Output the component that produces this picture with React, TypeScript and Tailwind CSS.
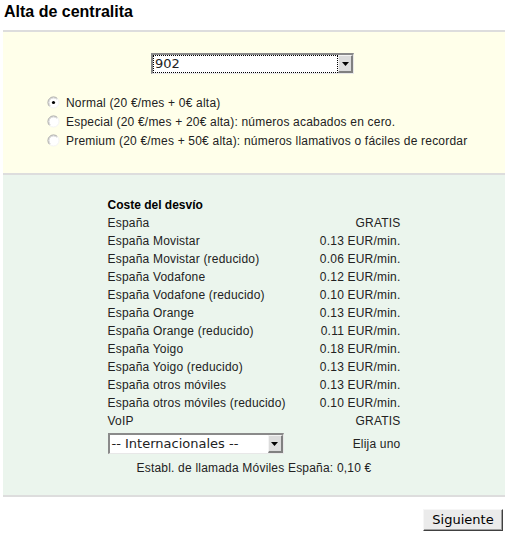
const rates = [
  ["España", "GRATIS"],
  ["España Movistar", "0.13 EUR/min."],
  ["España Movistar (reducido)", "0.06 EUR/min."],
  ["España Vodafone", "0.12 EUR/min."],
  ["España Vodafone (reducido)", "0.10 EUR/min."],
  ["España Orange", "0.13 EUR/min."],
  ["España Orange (reducido)", "0.11 EUR/min."],
  ["España Yoigo", "0.18 EUR/min."],
  ["España Yoigo (reducido)", "0.13 EUR/min."],
  ["España otros móviles", "0.13 EUR/min."],
  ["España otros móviles (reducido)", "0.10 EUR/min."],
  ["VoIP", "GRATIS"],
];

const plans = [
  { label: "Normal (20 €/mes + 0€ alta)", checked: true },
  { label: "Especial (20 €/mes + 20€ alta): números acabados en cero.", checked: false },
  { label: "Premium (20 €/mes + 50€ alta): números llamativos o fáciles de recordar", checked: false },
];

function Radio({ checked }: { checked: boolean }) {
  return (
    <svg width="13" height="13" viewBox="0 0 13 13" className="shrink-0 -mt-[2px]">
      <circle cx="6.5" cy="6.5" r="5.5" fill="#fff" />
      <path d="M2.6 10.4 A5.5 5.5 0 0 1 10.4 2.6" fill="none" stroke="#9c9c9c" strokeWidth="1" />
      <path d="M3.3 9.7 A4.5 4.5 0 0 1 9.7 3.3" fill="none" stroke="#d6d6d6" strokeWidth="1" />
      <path d="M10.4 2.6 A5.5 5.5 0 0 1 2.6 10.4" fill="none" stroke="#f4f4f4" strokeWidth="1" />
      {checked && <circle cx="6.5" cy="6.5" r="1.6" fill="#000" />}
    </svg>
  );
}

function Arrow() {
  return (
    <div className="flex w-[15px] shrink-0 items-center justify-center border-t border-l border-t-[#f4f4f4] border-l-[#f4f4f4] border-b-2 border-r-2 border-b-[#808080] border-r-[#808080] bg-[#dcdcdc]">
      <svg width="7" height="4" viewBox="0 0 7 4">
        <path d="M0 0 H7 L3.5 4 Z" fill="#000" />
      </svg>
    </div>
  );
}

function Select({ value, width, focused }: { value: string; width: string; focused?: boolean }) {
  return (
    <div
      className={`flex h-[21px] ${width} border-t-2 border-l-2 border-t-[#8a8a8a] border-l-[#8a8a8a] border-b border-r border-b-[#e8e8e8] border-r-[#e8e8e8] bg-white`}
    >
      <div
        className={`flex-1 pl-[2px] text-[13px] leading-[17px] tracking-normal text-[#222] ${focused ? "outline-1 outline-dotted outline-black -outline-offset-1" : ""}`}
      >
        {value}
      </div>
      <Arrow />
    </div>
  );
}

export default function App() {
  return (
    <div className="min-h-[533px] bg-white font-['Liberation_Sans',Arial,sans-serif] text-[12px] tracking-[0.2px] text-[#222]">
      <div className="h-[30px] pt-[2px] pl-[4px] text-[16px] font-bold leading-[19px] tracking-normal text-black">
        Alta de centralita
      </div>

      <div className="ml-[3px] w-[502px]">
        {/* Number type */}
        <div className="h-[143px] border-t-2 border-[#dddddd] bg-[#ffffea] pt-[21px]">
          <div className="flex justify-center pr-[3px] font-['DejaVu_Sans',sans-serif]">
            <Select value="902" width="w-[203px]" focused />
          </div>
          <div className="mt-[20px] pl-[44px]">
            {plans.map((p) => (
              <div key={p.label} className="flex h-[19px] items-center">
                <Radio checked={p.checked} />
                <span className="ml-[6px] leading-[19px]">{p.label}</span>
              </div>
            ))}
          </div>
        </div>

        {/* Forwarding costs */}
        <div className="h-[324px] border-t-2 border-b-2 border-[#dddddd] bg-[#ebf5ed] pt-[21px]">
          <div className="mx-auto w-[293px]">
            <div className="h-[18px] font-bold leading-[18px] tracking-normal text-black">Coste del desvío</div>
            {rates.map(([name, price]) => (
              <div key={name} className="flex h-[18px] items-center justify-between leading-[18px]">
                <span>{name}</span>
                <span>{price}</span>
              </div>
            ))}
            <div className="flex h-[27px] items-center justify-between">
              <div className="font-['DejaVu_Sans',sans-serif]">
                <Select value="-- Internacionales --" width="w-[176px]" />
              </div>
              <span>Elija uno</span>
            </div>
            <div className="mt-[2px] h-[18px] text-center leading-[18px]">
              Establ. de llamada Móviles España: 0,10 €
            </div>
          </div>
        </div>
      </div>

      <div className="mt-[12px] flex justify-end pr-[4px]">
        <button className="h-[22px] w-[80px] border-t border-l border-t-[#f6f6f6] border-l-[#f6f6f6] border-b border-r border-b-[#404040] border-r-[#404040] bg-[#ebebeb] font-['DejaVu_Sans',sans-serif] text-[13px] leading-[18px] tracking-normal text-black shadow-[inset_-1px_-1px_0_#a0a0a0]">
          Siguiente
        </button>
      </div>
    </div>
  );
}
